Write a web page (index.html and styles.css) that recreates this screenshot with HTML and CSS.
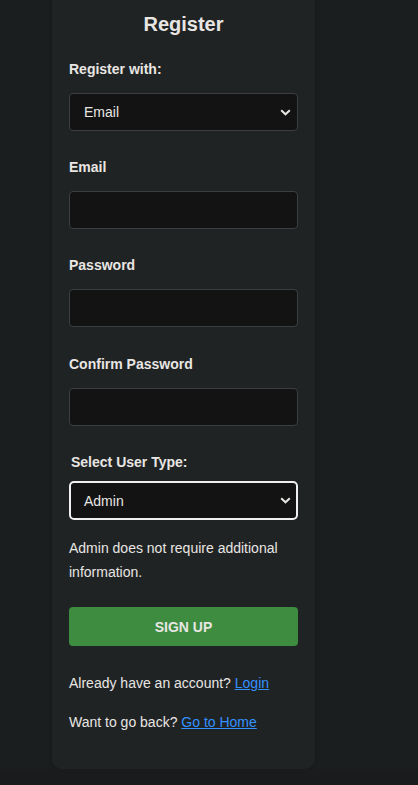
FILE: index.html
```html
<!DOCTYPE html>
<html lang="en">
<head>
<meta charset="utf-8">
<title>Register</title>
<link rel="stylesheet" href="styles.css">
</head>
<body>
<div class="page">
  <div class="card">
    <h2 class="title">Register</h2>
    <div class="field">
      <label class="label">Register with:</label>
      <div class="select">Email<svg class="chev" width="11" height="7" viewBox="0 0 11 7"><path d="M1.2 1.2 L5.5 5.3 L9.8 1.2" fill="none" stroke="#e8e6e3" stroke-width="2"/></svg></div>
    </div>
    <div class="field">
      <label class="label">Email</label>
      <div class="input"></div>
    </div>
    <div class="field field-wide">
      <label class="label">Password</label>
      <div class="input"></div>
    </div>
    <div class="field">
      <label class="label">Confirm Password</label>
      <div class="input"></div>
    </div>
    <label class="label label-type">Select User Type:</label>
    <div class="select focused">Admin<svg class="chev" width="11" height="7" viewBox="0 0 11 7"><path d="M1.2 1.2 L5.5 5.3 L9.8 1.2" fill="none" stroke="#e8e6e3" stroke-width="2"/></svg></div>
    <p class="note">Admin does not require additional information.</p>
    <button class="btn">SIGN UP</button>
    <p class="link-line">Already have an account? <a href="#">Login</a></p>
    <p class="link-line second">Want to go back? <a href="#">Go to Home</a></p>
  </div>
</div>
</body>
</html>
```
FILE: styles.css
```css
html, body {
  margin: 0;
  padding: 0;
}
body {
  background: #1a1b1c;
  font-family: "Liberation Sans", Arial, sans-serif;
  color: #e8e6e3;
}
.page {
  background: #1b1e1f;
  display: flex;
  justify-content: flex-start;
  padding-left: 52px;
  width: 366px;
}
.card {
  width: 229px;
  background: #202324;
  border-radius: 0 0 10px 10px;
  padding: 12px 17px 37px;
  box-shadow: 0 0 4px rgba(0,0,0,0.25);
}
.title {
  margin: 0 0 25px;
  font-size: 20px;
  line-height: 24px;
  text-align: center;
  font-weight: bold;
}
.field {
  margin-bottom: 28px;
}
.field-wide {
  margin-bottom: 29px;
}
.label {
  display: block;
  font-size: 14px;
  line-height: 16px;
  font-weight: bold;
  margin-bottom: 16px;
}
.label-type {
  padding-left: 2px;
  margin-bottom: 11px;
}
.input, .select {
  box-sizing: border-box;
  height: 38px;
  background: #131313;
  border: 1px solid #3b3f42;
  border-radius: 4px;
}
.select {
  display: flex;
  align-items: center;
  justify-content: space-between;
  padding: 0 6px 0 14px;
  font-size: 14px;
}
.select.focused {
  height: 39px;
  border: 2px solid #f0f0f0;
  padding-left: 13px;
  padding-right: 5px;
  border-radius: 5px;
}
.chev {
  display: block;
}
.note {
  margin: 16px 0 0;
  font-size: 14px;
  line-height: 24px;
}
.btn {
  display: block;
  width: 100%;
  height: 39px;
  margin-top: 23px;
  border: none;
  border-radius: 4px;
  background: #3d8c40;
  color: #e8e6e3;
  font-family: "Liberation Sans", Arial, sans-serif;
  font-weight: bold;
  font-size: 14px;
}
.link-line {
  margin: 27px 0 0;
  font-size: 14px;
  line-height: 20px;
}
.link-line.second {
  margin-top: 19px;
}
.link-line a {
  color: #3391ff;
  text-decoration: underline;
}
```
